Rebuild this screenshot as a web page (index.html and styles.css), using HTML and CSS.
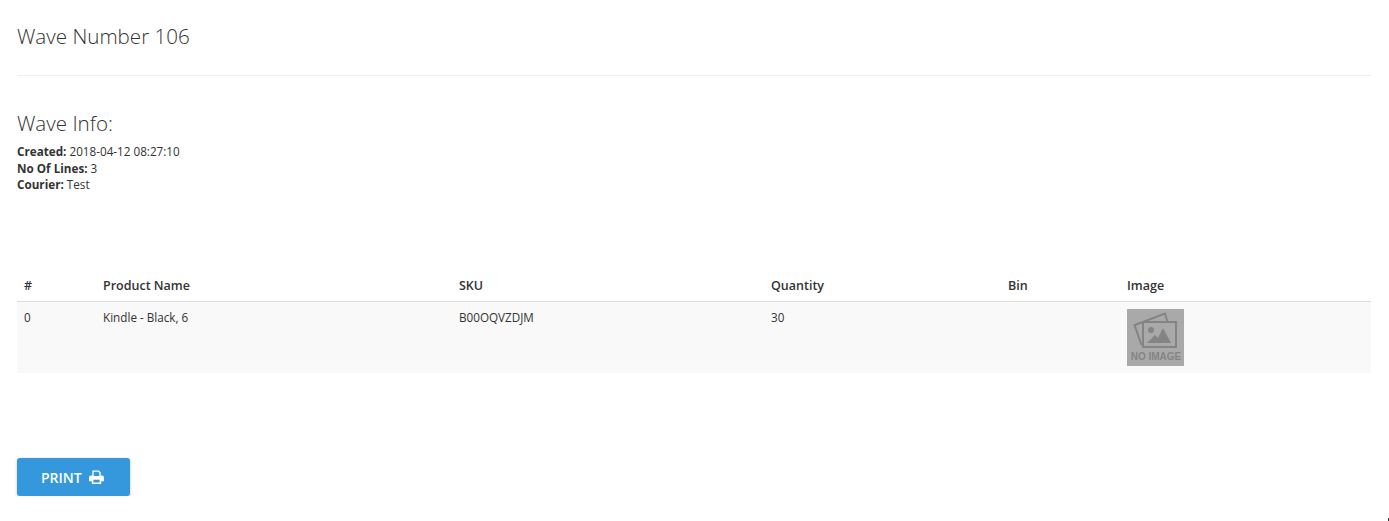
FILE: index.html
```html
<!DOCTYPE html>
<html>
<head>
    <meta charset="UTF-8">
    <meta name="viewport" content="width=device-width, initial-scale=1.0">
    <title>Wave Number 106</title>
    <link rel="stylesheet" href="styles.css">
</head>
<body>
    <h1 class="page-title">Wave Number 106</h1>
    <hr class="divider">

    <h2 class="info-title">Wave Info:</h2>
    <div class="info">
        <div><b>Created:</b> 2018-04-12 08:27:10</div>
        <div><b>No Of Lines:</b> 3</div>
        <div><b>Courier:</b> Test</div>
    </div>

    <table class="lines">
        <thead>
            <tr>
                <th class="col-num">#</th>
                <th class="col-name">Product Name</th>
                <th class="col-sku">SKU</th>
                <th class="col-qty">Quantity</th>
                <th class="col-bin">Bin</th>
                <th>Image</th>
            </tr>
        </thead>
        <tbody>
            <tr>
                <td>0</td>
                <td>Kindle - Black, 6</td>
                <td>B00OQVZDJM</td>
                <td>30</td>
                <td></td>
                <td>
                    <svg class="no-image" width="57" height="57" viewBox="0 0 57 57">
                        <rect width="57" height="57" fill="#a9a9a9"/>
                        <path d="M14.5 36 L7.5 16 L38 4.5 L40.5 13" fill="none" stroke="#848484" stroke-width="2"/>
                        <rect x="16" y="13" width="33" height="25" fill="#a9a9a9" stroke="#848484" stroke-width="2"/>
                        <circle cx="24" cy="21" r="3" fill="#848484"/>
                        <path d="M20 34 L28 26 L31 29 L36 19 L44 34 Z" fill="#848484"/>
                        <text x="29" y="51" class="no-image-text">NO IMAGE</text>
                    </svg>
                </td>
            </tr>
        </tbody>
    </table>

    <button class="print-btn" type="button">
        PRINT
        <svg width="15" height="14" viewBox="0 0 16 15">
            <path fill="#fff" d="M3.5 0.5 H10.5 L12.5 2.5 V6 H14 Q16 6 16 8 V12 H13 V15 H3 V12 H0 V8 Q0 6 2 6 H3.5 Z M5 2 V6.5 H11 V3.2 L9.8 2 Z M4.7 10.5 V13.3 H11.3 V10.5 Z"/>
        </svg>
    </button>

    <div class="corner-mark"></div>
</body>
</html>
```

FILE: styles.css
```css
body {
    margin: 0;
    padding: 0 18px 0 17px;
    font-family: "Open Sans", sans-serif;
    font-size: 11.7px;
    color: #333;
    background: #fff;
}
.page-title {
    margin: 0;
    padding-top: 23px;
    font-size: 20.6px;
    line-height: 27px;
    font-weight: 300;
}
.divider {
    margin: 25px 0 0;
    border: none;
    border-top: 1px solid #eee;
}
.info-title {
    margin: 32px 0 0;
    font-size: 20.6px;
    line-height: 30px;
    font-weight: 300;
}
.info {
    margin-top: 5px;
    line-height: 16.5px;
}
.info b {
    font-weight: 700;
}
.lines {
    width: 100%;
    margin-top: 76px;
    border-collapse: collapse;
    table-layout: fixed;
}
.lines th {
    padding: 8px 7px 6px;
    height: 18px;
    font-size: 12.5px;
    line-height: 18px;
    font-weight: 600;
    text-align: left;
    border-bottom: 1px solid #ddd;
}
.lines td {
    padding: 7px;
    line-height: 16px;
    vertical-align: top;
    background: #f9f9f9;
}
.col-num { width: 65px; }
.col-name { width: 342px; }
.col-sku { width: 298px; }
.col-qty { width: 223px; }
.col-bin { width: 105px; }
.no-image {
    display: block;
}
.no-image-text {
    font-family: "Liberation Sans", sans-serif;
    font-size: 10px;
    font-weight: 700;
    fill: #848484;
    text-anchor: middle;
}
.print-btn {
    display: flex;
    align-items: center;
    gap: 7px;
    height: 38px;
    margin-top: 85px;
    padding: 2px 26px 0 24px;
    border: none;
    border-radius: 3px;
    background: #3598dc;
    box-shadow: 0 1px 3px rgba(0,0,0,0.25);
    color: #fff;
    font-family: "Open Sans", sans-serif;
    font-size: 14px;
    font-weight: 600;
}
.print-btn svg {
    margin-top: -1px;
}
/* stray mark in the bottom right corner */
.corner-mark {
    position: absolute;
    left: 1388px;
    top: 518px;
    width: 1px;
    height: 3px;
    background: #333;
}
```
